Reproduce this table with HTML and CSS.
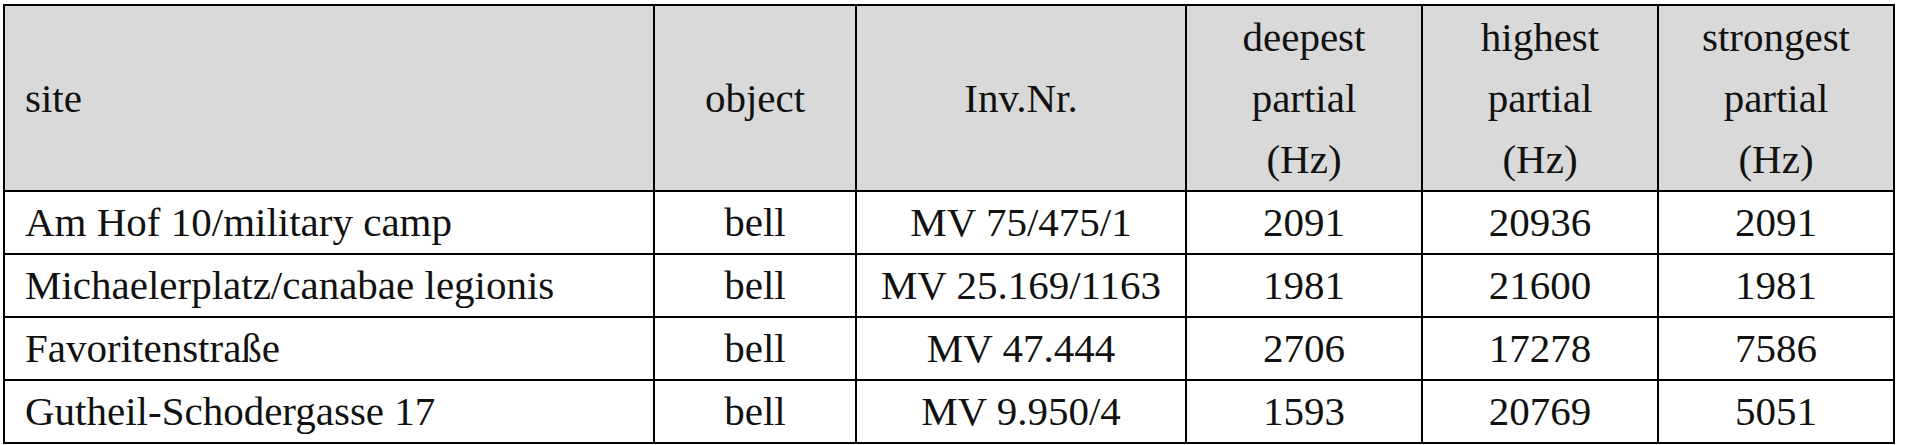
FILE: index.html
```html
<!DOCTYPE html>
<html lang="en">
<head>
<meta charset="utf-8">
<title>Bells</title>
<link rel="stylesheet" href="styles.css">
</head>
<body>
<div class="wrap">
<table class="data">
  <colgroup>
    <col class="c-site">
    <col class="c-object">
    <col class="c-inv">
    <col class="c-num">
    <col class="c-num">
    <col class="c-num">
  </colgroup>
  <thead>
    <tr>
      <th class="left">site</th>
      <th>object</th>
      <th>Inv.Nr.</th>
      <th>deepest<br>partial<br>(Hz)</th>
      <th>highest<br>partial<br>(Hz)</th>
      <th>strongest<br>partial<br>(Hz)</th>
    </tr>
  </thead>
  <tbody>
    <tr><td class="left">Am Hof 10/military camp</td><td>bell</td><td>MV 75/475/1</td><td>2091</td><td>20936</td><td>2091</td></tr>
    <tr><td class="left">Michaelerplatz/canabae legionis</td><td>bell</td><td>MV 25.169/1163</td><td>1981</td><td>21600</td><td>1981</td></tr>
    <tr><td class="left">Favoritenstraße</td><td>bell</td><td>MV 47.444</td><td>2706</td><td>17278</td><td>7586</td></tr>
    <tr><td class="left">Gutheil-Schodergasse 17</td><td>bell</td><td>MV 9.950/4</td><td>1593</td><td>20769</td><td>5051</td></tr>
  </tbody>
</table>
</div>
</body>
</html>
```
FILE: styles.css
```css
html, body {
  margin: 0;
  padding: 0;
  background: #ffffff;
}
.wrap {
  padding: 4px 0 0 3px;
}
.data {
  border-collapse: collapse;
  table-layout: fixed;
  width: 1889px;
  font-family: "Liberation Serif", Tinos, "Times New Roman", "DejaVu Serif", serif;
  font-size: 41px;
  line-height: 61px;
  color: #111111;
}
.c-site { width: 650px; }
.c-object { width: 202px; }
.c-inv { width: 330px; }
.c-num { width: 236px; }
.data th,
.data td {
  border: 2px solid #000000;
  padding: 0 4px;
  text-align: center;
  font-family: "Liberation Serif", Tinos, "Times New Roman", "DejaVu Serif", serif;
  font-weight: normal;
  white-space: nowrap;
}
.data th {
  background: #d9d9d9;
  vertical-align: middle;
  padding-top: 1px;
}
.data .left {
  text-align: left;
  padding-left: 20px;
}
```
